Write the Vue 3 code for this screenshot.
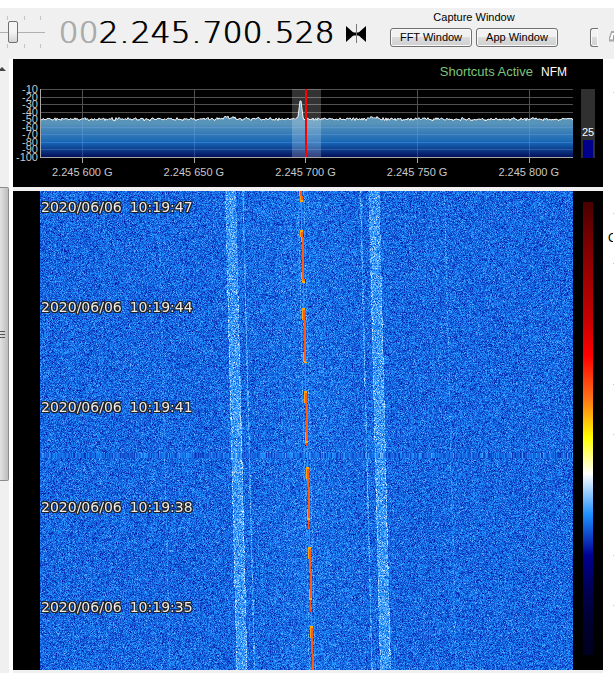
<script setup>
import { onBeforeUnmount, onMounted, ref } from 'vue'

const frequency = '002.245.700.528'.split('').map((char, i) => ({ char, dim: i < 2 }))
const levels = [-10, -20, -30, -40, -50, -60, -70, -80, -90, -100]
const channels = ['2.245 600 G', '2.245 650 G', '2.245 700 G', '2.245 750 G', '2.245 800 G']
const stamps = ['10:19:47', '10:19:44', '10:19:41', '10:19:38', '10:19:35']
const gridY = levels.map((_, i) => Math.round(i * 7.5) + 0.5)
const gridX = [42, 154, 265, 377, 489]

// Small seeded generator keeps the noise floor stable between renders.
function generator(seed) {
  let s = seed
  return () => {
    s = (s + 0x6d2b79f5) | 0
    let t = Math.imul(s ^ (s >>> 15), 1 | s)
    t = (t + Math.imul(t ^ (t >>> 7), 61 | t)) ^ t
    return ((t ^ (t >>> 14)) >>> 0) / 4294967296
  }
}

function buildTrace() {
  const rnd = generator(11)
  const points = []
  for (let x = 0; x <= 533; x++) {
    let y = 30.2 + (rnd() + rnd() - 1) * 2
    if ((x > 183 && x < 196) || (x > 327 && x < 339)) y -= 0.8 + rnd() * 1.6
    const d = Math.abs(x - 260.5)
    if (d < 3) y = Math.min(y, 8 + d * 8)
    points.push(`${x},${y.toFixed(1)}`)
  }
  return points.join(' ')
}
const trace = buildTrace()

const stops = [
  [0, 0, 0, 32], [0.07, 0, 0, 48], [0.145, 0, 0, 80], [0.224, 0, 0, 145],
  [0.312, 30, 144, 255], [0.397, 255, 255, 255], [0.483, 255, 255, 0],
  [0.57, 254, 109, 22], [0.658, 255, 0, 0], [1, 74, 0, 0]
]
function palette(v) {
  const c = Math.max(0, Math.min(1, v))
  let i = 1
  while (i < stops.length - 1 && stops[i][0] < c) i++
  const a = stops[i - 1]
  const b = stops[i]
  const t = (c - a[0]) / (b[0] - a[0])
  return [1, 2, 3].map((k) => a[k] + (b[k] - a[k]) * t)
}

const bursts = [[-40, 11], [39, 92], [117, 172], [200, 252], [276, 329], [356, 409], [435, 490]]
const waterfall = ref(null)

function paint() {
  const canvas = waterfall.value
  if (!canvas) return
  const w = canvas.clientWidth
  const h = canvas.clientHeight
  if (!w || !h) return
  canvas.width = w
  canvas.height = h
  const ctx = canvas.getContext('2d')
  const img = ctx.createImageData(w, h)
  const rnd = generator(2020)
  const sx = 533 / w
  let held = null
  for (let y = 0; y < h; y++) {
    const drift = (y / 479) * 11.5
    const burst = bursts.find(([a, b]) => y >= a && y < b)
    const smear = y > 262 && y < 267 && held
    const row = []
    const center = Math.round(261.4 + drift)
    for (let px = 0; px < w; px++) {
      const x = px * sx
      let v = 0.287 + (rnd() + rnd() + rnd() - 1.5) * 0.043
      const rel = Math.round(x) - center
      v += 0.005 * Math.exp(-(rel * rel) / 1600)
      for (const start of [184.5, 328]) {
        const u = x - start - drift
        if (u >= 0 && u <= 11) {
          v += 0.012 + rnd() * 0.042
          if ((u < 1.2 || u > 9.8) && y > 80 && rnd() < 0.5) v += 0.03
        }
      }
      for (const [start, gain] of [[202.5, 0.028], [320, 0.028], [118, 0.012], [404, 0.012]]) {
        if (Math.abs(x - start - drift) < 0.7) v += gain + rnd() * 0.008
      }
      if (rel === 2 || rel === -4) v += 0.02
      if (smear) v = 0.285 + (held[px] - 0.285) * 0.75
      if (burst) {
        const edge = y - burst[0] < 12 || burst[1] - y < 12
        if (rel === 0 || rel === -1) v = 0.58 + rnd() * 0.01
        if (rel === -2 && edge) v = 0.54
        if ((y - burst[0] < 2 || burst[1] - y < 3) && (rel === 0 || rel === -1)) v = 0.53
      } else if (rel === -1) v = 0.59
      row.push(v)
      const c = palette(v)
      const o = (y * w + px) * 4
      img.data[o] = c[0]
      img.data[o + 1] = c[1]
      img.data[o + 2] = c[2]
      img.data[o + 3] = 255
    }
    if (!smear) held = row
  }
  ctx.putImageData(img, 0, 0)
}

onMounted(() => {
  paint()
  window.addEventListener('resize', paint)
})
onBeforeUnmount(() => window.removeEventListener('resize', paint))
</script>

<template>
  <div class="app">
    <header class="toolbar">
      <div class="volume">
        <div class="ticks"><i></i><i></i><i></i></div>
        <input type="range" min="0" max="100" value="23" aria-label="Volume" />
        <div class="ticks"><i></i><i></i><i></i></div>
      </div>
      <div class="frequency">
        <span v-for="(d, i) in frequency" :key="i" :class="{ dot: d.char === '.', dim: d.dim }">{{ d.char }}</span>
      </div>
      <button class="tuning" aria-label="Center tuning">
        <svg width="20" height="20" viewBox="0 0 20 20">
          <path d="M0 2 L9 10 L0 18 Z M20 2 L11 10 L20 18 Z" fill="#000" />
          <path d="M6 10 H14" stroke="#000" stroke-width="3" />
          <path d="M10.5 0 V19" stroke="#777" />
        </svg>
      </button>
      <div class="capture">
        <span>Capture Window</span>
        <div class="buttons">
          <button class="btn">FFT Window</button>
          <button class="btn">App Window</button>
        </div>
      </div>
      <button class="btn cut" aria-label="More"></button>
      <svg class="logo" width="5" height="14" viewBox="0 0 5 14">
        <path d="M0 10 L3 2 L5 2 M0 10.5 H5" stroke="#a8a8a8" stroke-width="2" fill="none" />
        <path d="M1 9 L3 3 H5 V5 L3 9 Z" fill="#fff" />
        <path d="M4.5 5 V10" stroke="#999" />
      </svg>
    </header>

    <div class="body">
      <div class="scroll">
        <svg class="up" width="6" height="4" viewBox="0 0 6 4"><path d="M0 4 V2 L2 0 L6 4 Z" fill="#444" /></svg>
        <div class="thumb"><i></i><i></i><i></i></div>
      </div>

      <main class="panels">
        <section class="spectrum">
          <div class="status"><span class="active">Shortcuts Active</span><span>NFM</span></div>
          <div class="chart">
            <ol class="levels"><li v-for="l in levels" :key="l">{{ l }}</li></ol>
            <div class="plot">
              <svg class="graph" viewBox="0 0 533 74" preserveAspectRatio="none">
                <defs>
                  <linearGradient id="floor" x1="0" y1="0" x2="0" y2="1">
                    <stop offset="0" stop-color="#6496b4" />
                    <stop offset="0.4" stop-color="#5894b9" />
                    <stop offset="0.75" stop-color="#1464b4" />
                    <stop offset="1" stop-color="#04105a" />
                  </linearGradient>
                </defs>
                <path :d="gridY.map((y) => `M0 ${y}H533`).join('') + gridX.map((x) => `M${x + 0.5} 0V68`).join('')" stroke="#505050" fill="none" />
                <polygon :points="`0,68 ${trace} 533,68`" fill="url(#floor)" />
                <path :d="gridY.slice(5).map((y) => `M0 ${y}H533`).join('') + gridX.map((x) => `M${x + 0.5} 31V68`).join('')" stroke="#8cb4ff" stroke-opacity="0.25" fill="none" />
                <polyline :points="trace" fill="none" stroke="#f4f4f4" />
                <rect x="252" y="0" width="29" height="68" fill="#fff" fill-opacity="0.2" />
                <path :d="'M0 68.5H533M0.5 0V68' + gridX.map((x) => `M${x + 0.5} 69V74`).join('')" stroke="#a8a8a8" fill="none" />
                <rect x="265" y="0" width="2" height="68" fill="#f00" />
              </svg>
              <div class="channels"><span v-for="c in channels" :key="c">{{ c }}</span></div>
            </div>
            <div class="meter"><span>25</span><i></i></div>
          </div>
        </section>

        <section class="fall">
          <div class="field">
            <canvas ref="waterfall"></canvas>
            <ol class="stamps">
              <li v-for="s in stamps" :key="s"><span>2020/06/06</span><span>{{ s }}</span></li>
            </ol>
          </div>
          <div class="scale"></div>
        </section>
      </main>

      <aside class="side">
        <span class="clip">C</span>
        <div class="frames"><i></i><i></i><i></i><i></i></div>
      </aside>
    </div>
  </div>
</template>

<style>
body {
  margin: 0;
  background: #fff;
}
</style>

<style scoped>
.app {
  display: flex;
  flex-direction: column;
  min-height: 100vh;
  box-sizing: border-box;
  padding-top: 8px;
  overflow: hidden;
  font-family: "Liberation Sans", Arial, sans-serif;
  font-size: 11px;
  color: #000;
}
ol {
  list-style: none;
  margin: 0;
  padding: 0;
}
.toolbar {
  display: flex;
  height: 51px;
  background: #f0f0f0;
}
.volume {
  width: 45px;
  flex: none;
  padding-top: 8px;
}
.ticks {
  display: flex;
  justify-content: space-between;
  height: 4px;
  padding: 0 4px 0 7px;
}
.ticks i {
  width: 1px;
  background: #c4c4c4;
}
.volume input {
  appearance: none;
  display: block;
  width: 100%;
  height: 24px;
  margin: 0;
  background: linear-gradient(#b0b0b0, #b0b0b0) center / 100% 1px no-repeat;
}
.volume input::-webkit-slider-thumb {
  appearance: none;
  box-sizing: border-box;
  width: 10px;
  height: 22px;
  border: 1px solid #707070;
  border-radius: 2px;
  background: linear-gradient(#f4f4f4 50%, #d4d4d4);
}
.frequency {
  display: flex;
  margin-left: 13px;
  padding-top: 2px;
  font: 200 31px/44px "DejaVu Sans", sans-serif;
  text-shadow: 1px 0 currentColor;
}
.frequency span {
  width: 20px;
  text-align: center;
}
.frequency .dot {
  width: 12px;
}
.frequency .dim {
  color: #aaa;
}
.tuning {
  align-self: flex-start;
  margin: 16px 0 0 12px;
  padding: 0;
  border: 0;
  background: none;
}
.tuning svg {
  display: block;
}
.capture {
  display: flex;
  flex-direction: column;
  align-items: center;
  gap: 4px;
  margin-left: 24px;
  padding-top: 3px;
  line-height: 13px;
}
.buttons {
  display: flex;
  gap: 4px;
}
.btn {
  box-sizing: border-box;
  width: 82px;
  height: 19px;
  padding: 0;
  border: 1px solid #707070;
  border-radius: 3px;
  box-shadow: inset 0 0 0 1px #fafafa;
  background: linear-gradient(#f2f2f2 50%, #dcdcdc 50%, #cfcfcf);
  font: 11px/15px "Liberation Sans", Arial, sans-serif;
  color: #000;
  white-space: nowrap;
}
.cut {
  width: 8px;
  margin: 20px 0 0 32px;
  border-right: 0;
  border-radius: 3px 0 0 3px;
}
.logo {
  margin: 22px 0 0 auto;
}
.body {
  display: flex;
  flex: 1;
}
.scroll {
  width: 9px;
  flex: none;
  padding-top: 8px;
  margin-right: 4px;
  background: #f0f0f0;
}
.up {
  display: block;
}
.thumb {
  display: flex;
  flex-direction: column;
  justify-content: center;
  gap: 2px;
  box-sizing: border-box;
  height: 294px;
  margin-top: 116px;
  border: 1px solid #8c8c8c;
  border-left: 0;
  border-radius: 0 2px 2px 0;
  background: linear-gradient(90deg, #e2e2e2, #bdbdbd);
}
.thumb i {
  width: 5px;
  height: 1px;
  background: #555;
}
.panels {
  display: flex;
  flex: 1;
  flex-direction: column;
  gap: 4px;
  min-width: 0;
  padding-bottom: 3px;
  background: #f0f0f0;
}
.spectrum {
  box-sizing: border-box;
  height: 128px;
  background: #000;
  color: #c8c8c8;
}
.status {
  display: flex;
  justify-content: flex-end;
  gap: 8px;
  height: 30px;
  padding-right: 36px;
  box-sizing: border-box;
  font-size: 12px;
  line-height: 26px;
  color: #fff;
}
.active {
  font-size: 13px;
  color: #7cc47c;
}
.chart {
  display: flex;
}
.levels {
  display: grid;
  grid-template-rows: repeat(10, 1fr);
  box-sizing: border-box;
  width: 27px;
  height: 75px;
  margin-top: -4px;
  padding-right: 2px;
  text-align: right;
}
.levels li {
  height: 0;
  line-height: 9px;
}
.plot {
  flex: 1;
  min-width: 0;
}
.graph {
  display: block;
  width: 100%;
  height: 74px;
}
.channels {
  display: flex;
  justify-content: space-between;
  padding: 2px 14px 0 12px;
  line-height: 14px;
}
.meter {
  display: flex;
  flex-direction: column;
  justify-content: flex-end;
  align-items: center;
  gap: 2px;
  width: 14px;
  height: 69px;
  margin: 0 8px;
  background: #303030;
  color: #fff;
}
.meter i {
  width: 10px;
  height: 18px;
  background: #00008b;
}
.fall {
  display: flex;
  flex: 1;
  padding-left: 27px;
  background: #000;
}
.field {
  position: relative;
  flex: 1;
}
.field canvas {
  position: absolute;
  width: 100%;
  height: 100%;
}
.stamps {
  position: relative;
  padding: 8px 0 0 1px;
  font: 14px/16px "DejaVu Sans", Verdana, sans-serif;
  color: #ececec;
  text-shadow: 1px 0 #222, -1px 0 #222, 0 1px #222, 0 -1px #222, 1px 1px #222, -1px -1px #222, 1px -1px #222, -1px 1px #222;
}
.stamps li {
  display: flex;
  gap: 8px;
}
.stamps li + li {
  padding-top: 84px;
}
.scale {
  width: 10px;
  margin: 11px 10px 15px;
  background: linear-gradient(#4a0000, #750000 8%, #9f0000 17%, #c60000 26%, #f00 34%, #fe6d16 43%, #ff0 52%, #fff 60%, #1e90ff 69%, #000091 78%, #000050 86%, #000030 93%, #000020);
}
.side {
  display: flex;
  justify-content: space-between;
  width: 11px;
  flex: none;
  overflow: hidden;
}
.clip {
  width: 5px;
  overflow: hidden;
  padding-left: 5px;
  padding-top: 172px;
  font-size: 12px;
  line-height: 14px;
}
.frames {
  display: flex;
  flex-direction: column;
  gap: 49px;
  height: 0;
  padding-top: 33px;
}
.frames i {
  width: 1px;
  height: 120px;
  flex: none;
  border: solid #c8c8c8;
  border-width: 1px 0;
}
</style>
